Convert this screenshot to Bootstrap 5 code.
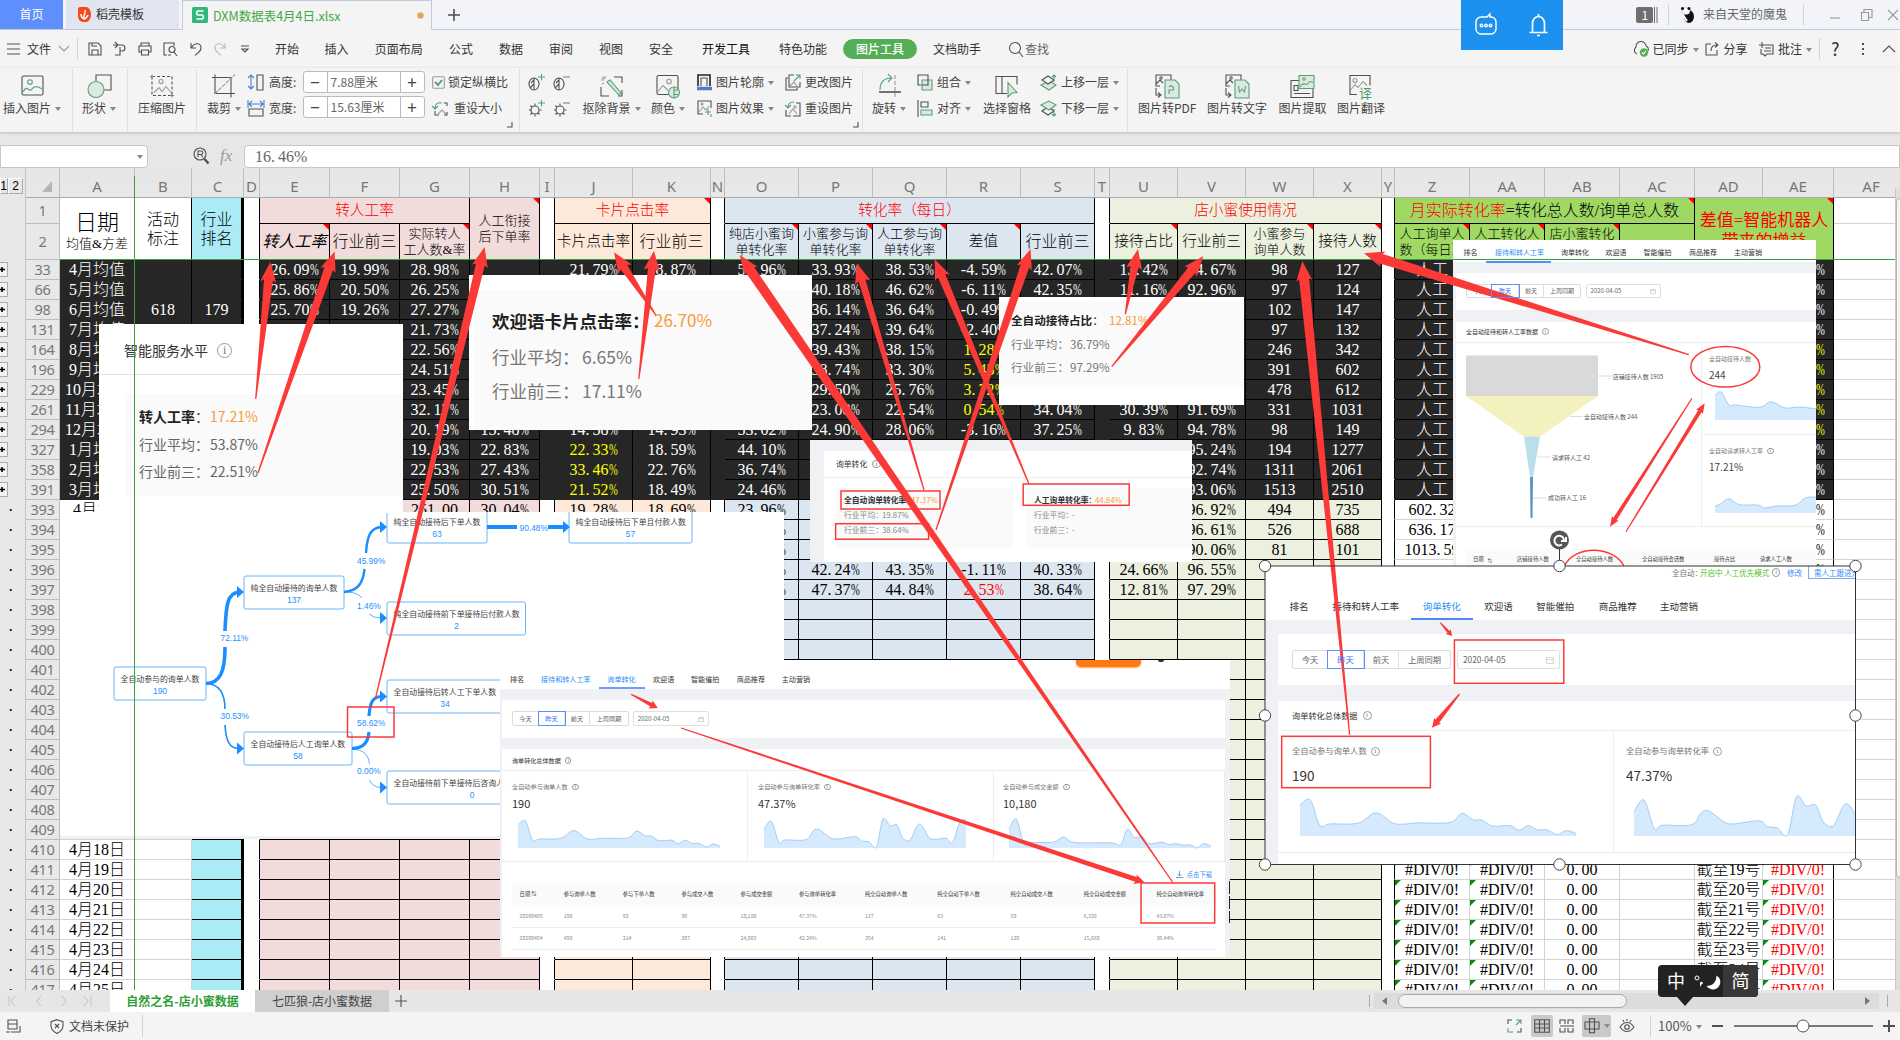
<!DOCTYPE html>
<html lang="zh-CN">
<head>
<meta charset="utf-8">
<meta name="viewport" content="width=device-width, initial-scale=1">
<title>DXM数据表4月4日.xlsx</title>
<link href="https://cdn.jsdelivr.net/npm/bootstrap@5.3.0/dist/css/bootstrap.min.css" rel="stylesheet">
<style>
:root{--ui:"Noto Sans","Noto Sans CJK SC",sans-serif;--song:"Liberation Serif","Noto Sans CJK SC",serif;--red:#fb3a38}
html,body{height:100%}
body{width:1900px;height:1040px;overflow:hidden;margin:0;background:#e7e7e7;font:12px/1.2 "Noto Sans CJK SC",sans-serif;color:#333}
svg{display:block;flex:none;overflow:visible}
.ic{fill:none;stroke:#505050;stroke-width:1.1}
.g{stroke:#5a9f78}.gf{fill:#dbe9e0}.bl{stroke:#4a80d0}.lt{stroke:#999}
.lane{display:flex;align-items:center;white-space:nowrap}
.lane>*{flex:none;display:flex;align-items:center;height:100%}
/* title bar */
#titlebar{height:30px;background:#f2f4fa;border-bottom:1px solid #c3c9df}
#titlebar .home{width:63px;height:29px;background:#5f8ffc;color:#fff}
#titlebar .docer{width:113px;height:29px;background:#e1e5f0;margin-left:3px;padding-left:12px;gap:5px}
#titlebar .sheetfile{width:250px;height:30px;background:#f4f4f4;margin-left:3px;border:1px solid #c3c9df;border-bottom:0;padding-left:9px;gap:5px;color:#41a946;font-size:12.5px}
#tray{left:1461px;top:0;width:102px;height:50px;background:#1b90ee;gap:30px;z-index:5}
.vsep{width:1px!important;background:#d2d2d2}
#menubar{height:38px;background:#f4f4f4}
#menubar .pill{height:20px;border-radius:10px;background:#54ae55;color:#fff;width:74px;font-weight:500;display:flex;align-items:center;justify-content:center}
#ribbon{height:64px;background:#f4f4f4;box-shadow:0 1px 3px #bbb;position:relative;z-index:1;color:#444}
#ribbon .big{display:flex;flex-direction:column;align-items:center;gap:2px;height:60px;padding-top:4px;justify-content:flex-start}
#ribbon .big svg{height:25px}
#ribbon .duo{display:flex;flex-direction:column;align-items:flex-start;gap:8px;height:62px;padding-top:4px}
#ribbon .duo>div{display:flex;align-items:center;height:18px;gap:4px}
.car::after{content:"";display:inline-block;border:3px solid transparent;border-top:4px solid #888;border-bottom:0;margin-left:4px;vertical-align:2px}
.spin{width:122px;height:22px!important;border:1px solid #bbb;border-radius:3px;background:#fff;display:flex;align-items:center}
.spin b{width:23px;text-align:center;font-weight:400;font-size:17px;line-height:20px;color:#444;flex:none}
.spin i{font-style:normal;flex:1;border-left:1px solid #bbb;border-right:1px solid #bbb;padding-left:3px;line-height:20px;color:#666;font-size:12px}
#fbar{height:36px;padding-top:13px;background:#e7e7e7}
.namebox{width:148px;height:23px;background:#fff;border:1px solid #c6c6c6;border-radius:0 4px 4px 0}
.fxbox{width:1656px;height:23px;background:#fff;border:1px solid #c6c6c6;border-radius:4px 0 0 4px;font:16px/21px var(--song);color:#666;padding-left:10px}
/* grid */
#stage{position:relative;height:822px;overflow:hidden;background:#e7e7e7}
#grid{table-layout:fixed;border-collapse:separate;border-spacing:0;width:1909px;background:#fff}
#grid td,#grid th{padding:0;text-align:center;vertical-align:middle;white-space:nowrap;overflow:hidden;font:300 16px/19px var(--song);color:#000;border-right:1px solid #d4d4d4;border-bottom:1px solid #d4d4d4;position:relative}
#grid tr.data td{padding-top:1px;line-height:18px}
#grid th{background:#e8e8e8;font:15px/19px var(--ui);color:#777;border-color:#bdbdbd}
#grid th.num{font-size:14.5px;letter-spacing:-.3px}
#grid th.ol{border-right:1px solid #c4c4c4;border-bottom:0;text-align:left;font:bold 12px/15px "Liberation Sans",sans-serif;color:#000}
#grid th.col{background:linear-gradient(#e6e6e6,#e8e8e8);padding-top:8px;border-bottom-color:#aaa}
#grid td.k{border-color:#000}
#grid td.dk{background:#262626;color:#fff;border-right-color:#000;border-bottom-color:#000}
#grid td.nb{border-bottom-color:#262626;border-right-color:#262626}
#grid td.nh{border-bottom-color:#262626}
#grid td.wh{background:#fff;border-color:#fff;border-right-color:#000}
#grid td.cy{background:#abebf5;border-color:#000;border-right:3px solid #000}
#grid td.dk.thick{border-right:3px solid #000}
#grid td.pk{background:#f2dcdb}#grid td.or{background:#fde9d9}#grid td.bu{background:#dce6f1}#grid td.gn{background:#ebf1de}#grid td.gr{background:#9fd863}
#grid td.ye{color:#ff0}#grid td.rd{color:#f00}
#grid td.s13{font-size:13px;line-height:16px}#grid td.s14{font-size:14.67px}
#grid td.note::after{content:"";position:absolute;right:0;top:0;border:3px solid #f00;border-left-color:transparent;border-bottom-color:transparent}
#grid td.err::before{content:"";position:absolute;left:0;top:0;border:3px solid #0a8a0a;border-right-color:transparent;border-bottom-color:transparent}
.plus{display:block;width:8px;height:15px;border:1px solid #aaa;border-left:0;background:#f2f2f2}
.lvl{display:inline-block;width:15px;height:16px;border:1px solid #aaa;border-left-color:#fff;border-top-color:#fff;text-align:center;font:12px/14px "Liberation Sans",sans-serif;margin-top:-2px}
#vbar{right:0;top:20px;width:5px;height:802px;background:#dedede;border-left:1px solid #c8c8c8}
#vbar div{margin-top:10px;height:680px;background:#f4f4f4;border:1px solid #b5b5b5;border-right:0;border-radius:4px 0 0 4px}
/* inserted pictures */
.pic{position:absolute;background:#fff;overflow:hidden;white-space:nowrap;color:#333}
.pic .stat{display:flex;align-items:center}
.og{color:#f79a35}.mut{color:#777}.blu{color:#2f8ff5}
.seg{display:flex;border:1px solid #dcdcdc;border-radius:2px;color:#666}
.seg>div{display:flex;align-items:center;justify-content:center;border-right:1px solid #e0e0e0;flex:none}
.seg>div:last-child{border:0}
.seg>.on{outline:1px solid #5c8ff8;color:#2f6ff5;z-index:1}
.dt{display:flex;align-items:center;justify-content:space-between;border:1px solid #e0e0e0;border-radius:2px;color:#666}
.inf{display:inline-flex;align-items:center;justify-content:center;border:1px solid #999;border-radius:50%;width:1.3em;height:1.3em;font:.85em/1 "Liberation Serif",serif;color:#777;flex:none}
#over{position:absolute;left:0;top:0}
/* bottom */
#tabsbar{height:22px;background:#e6e6e6}
#status{height:28px;background:#f4f4f4;color:#444}
#ime{left:1658px;top:965px;width:100px;height:32px;background:#222;border-radius:4px;color:#fff;font-size:18px;z-index:6;overflow:visible}
#ime::after{content:"";position:absolute;left:19px;top:32px;border:8px solid transparent;border-top:9px solid #222;border-bottom:0}
#ime .jian{width:35px;background:#383838;border-radius:0 4px 4px 0}
</style>
<script src="https://cdn.jsdelivr.net/npm/bootstrap@5.3.0/dist/js/bootstrap.bundle.min.js"></script>
</head>
<body>
<header id="titlebar" class="d-flex align-items-center">
  <div class="home d-flex align-items-center justify-content-center">首页</div>
  <div class="docer d-flex align-items-center"><svg width="13" height="15" viewBox="0 0 13 15"><path fill="#f8481b" d="M2 0h6a5 7.500 0 0 1 0 15H5a5 6 0 0 1-5-6V2a2 2 0 0 1 2-2z"/><path stroke="#fff" stroke-width="1.500" fill="none" d="M6 12C5 8 8 7 7 3M6 12c2 0 3-2 4-4M6 12C4 11 3 9 3 7"/></svg><span>稻壳模板</span></div>
  <div class="sheetfile d-flex align-items-center"><svg width="16" height="16" viewBox="0 0 16 16"><rect width="16" height="16" rx="1.500" fill="#2fb97c"/><path fill="none" stroke="#fff" stroke-width="1.600" d="M11.500 4H6.200a1.500 1.500 0 0 0-1.500 1.500v1A1.500 1.500 0 0 0 6.200 8h3.600a1.500 1.500 0 0 1 1.500 1.500v1A1.500 1.500 0 0 1 9.800 12H4.500"/></svg><span style="width:199px">DXM数据表4月4日.xlsx</span><svg width="7" height="7"><circle cx="3.500" cy="3.500" r="3.200" fill="#e8a35c"/></svg></div>
  <svg class="ic" style="margin-left:16px" width="12" height="12"><path stroke-width="1.600" d="M6 0v12M0 6h12"/></svg>
  <div class="lane" style="margin-left:auto;width:264px;height:29px;color:#666">
    <div style="width:32px"><svg width="22" height="16"><rect width="17" height="16" rx="2" fill="#6f6f6f"/><text x="5.500" y="12.500" fill="#fff" font-size="12">1</text><path d="M18.500 0v16M21 0v16" stroke="#6f6f6f"/></svg></div>
    <div style="width:12px"><i class="vsep" style="height:20px"></i></div>
    <div style="width:23px"><svg width="15" height="16"><ellipse cx="9" cy="9.500" rx="5" ry="6.500" fill="#111"/><ellipse cx="6" cy="4" rx="4" ry="3.500" fill="#fff" stroke="#aaa" stroke-width=".5"/><circle cx="2.500" cy="1.500" r="1.500"/><circle cx="9" cy="1.500" r="1.500"/><path d="M3 8l4 6" stroke="#fff" stroke-width="2"/></svg></div>
    <div style="width:100px">来自天堂的魔鬼</div>
    <div style="width:27px"><i class="vsep" style="height:20px"></i></div>
    <div style="width:31px"><svg class="ic lt" width="10" height="10"><path d="M0 8h10"/></svg></div>
    <div style="width:27px"><svg class="ic lt" width="12" height="12"><path d="M.5 3.500h7v8h-7zM3 3V.5h8v8H8"/></svg></div>
    <div><svg class="ic lt" width="12" height="12"><path d="M0 1l10 10M10 1L0 11"/></svg></div>
  </div>
</header>
<div id="tray" class="position-absolute d-flex align-items-center justify-content-center">
  <svg width="24" height="24" fill="none" stroke="#fff" stroke-width="1.400"><path d="M7 4h5l3-3v3h1a5 5 0 0 1 5 5v7a5 5 0 0 1-5 5H6a5 5 0 0 1-5-5V9a5 5 0 0 1 5-5z"/><circle cx="6.500" cy="12.500" r="1.300"/><circle cx="11" cy="12.500" r="1.300"/><circle cx="15.500" cy="12.500" r="1.300"/></svg>
  <svg width="20" height="24" fill="none" stroke="#fff" stroke-width="1.700"><path d="M3.500 19v-8.500a6 7 0 0 1 12 0V19M.5 19.500h18M9.500 1v3M8 22.500h3"/></svg>
</div>
<nav id="menubar" class="lane"></nav>
<section id="ribbon" class="lane"></section>
<section id="fbar" class="d-flex">
  <div class="namebox d-flex align-items-center justify-content-end pe-1"><span class="car"></span></div>
  <svg class="ic" style="margin:2px 0 0 45px" width="17" height="18"><circle cx="7" cy="7" r="6"/><path d="M5 10V4h3a1.700 1.700 0 0 1 0 3.500H5M8 7.500l2 2.500"/><path stroke-width="2.400" d="M11.500 12l4 4.500"/></svg>
  <div style="width:35px;font:italic 17px/21px 'Liberation Serif',serif;color:#999;padding-left:10px">fx</div>
  <div class="fxbox" style="margin-left:-1px">16.<span style="margin-left:3px"></span>46%</div>
</section>
<main id="stage"></main>
<section id="tabsbar" class="lane">
  <div style="width:110px;padding-left:8px"><svg class="ic" style="stroke:#c8c8c8" width="80" height="10"><path d="M1 0v10M7 0L3 5l4 5M33 0l-4 5 4 5M54 0l4 5-4 5M76 0l4 5-4 5M83 0v10"/></svg></div>
  <div style="width:145px;background:#fff;color:#2e9e35;font-weight:700;justify-content:center;font-size:12px">自然之名-店小蜜数据</div>
  <div style="width:134px;background:#cfcfcf;color:#444;justify-content:center">七匹狼-店小蜜数据</div>
  <div style="width:980px;padding-left:6px"><svg class="ic" width="12" height="12"><path d="M6 0v12M0 6h12"/></svg></div>
  <div style="width:5px"><i class="vsep" style="height:12px;background:#aaa"></i></div>
  <div style="width:505px;background:#dcdcdc;height:16px;padding:0 8px"><svg width="6" height="8"><path d="M5 0v8L0 4z" fill="#777"/></svg><span style="width:229px;height:14px;margin-left:10px;border:1px solid #aaa;border-radius:7px;background:#f2f2f2"></span><svg style="margin-left:auto" width="6" height="8"><path d="M0 0v8l5-4z" fill="#777"/></svg></div>
  <div style="padding-left:8px"><i class="vsep" style="height:12px;background:#aaa"></i></div>
</section>
<footer id="status" class="lane">
  <div style="width:50px;padding-left:6px"><svg class="ic" width="14" height="14"><path d="M2 1h9v9H2zM2 5h9M5 13h9V7M0 13h4"/></svg></div>
  <div style="width:19px"><svg class="ic" width="14" height="15"><path d="M7 .7l6 2V7c0 4-3 6-6 7.500C4 13 1 11 1 7V2.700zM5 5l4 4M9 5L5 9"/></svg></div>
  <div style="width:73px">文档未保护</div>
  <div><i class="vsep" style="height:22px"></i></div>
  <div class="ms-auto" style="width:24px"><svg class="ic" width="15" height="14"><path d="M1 5V1h4M10 13h4V9"/><path class="g" d="M9 1h5v4M1 9v4h5M14 1L9 6"/></svg></div>
  <div style="width:28px"><span class="d-flex align-items-center justify-content-center" style="width:22px;height:22px;background:#c9c9c9;border-radius:2px"><svg class="ic" width="16" height="14"><path d="M.7.7h14.600v12.600H.7zM.7 5h14.600M.7 9h14.600M5.500.7v12.600M10.500.7v12.600"/></svg></span></div>
  <div style="width:23px"><svg class="ic" width="16" height="14"><path d="M1 5V1h5v4M9 5V1h5v4M1 9v4h5V9M9 9v4h5V9M1 7h14"/></svg></div>
  <div style="width:37px"><span class="d-flex align-items-center justify-content-center car" style="width:29px;height:22px;background:#c9c9c9;border-radius:2px"><svg class="ic" width="16" height="16"><path d="M1 4h14v7H1zM5.500.7h5v14h-5zM5.500 4v7M10.500 4v7"/></svg></span></div>
  <div style="width:31px"><svg class="ic" width="16" height="15"><path d="M1 8c4-6 10-6 14 0-4 6-10 6-14 0zM4 1l1 2M8 0v2M12 1l-1 2"/><circle cx="8" cy="8" r="2.300"/></svg></div>
  <div style="width:8px"><i class="vsep" style="height:22px"></i></div>
  <div style="width:54px;font-size:13px;color:#555"><span class="car">100%</span></div>
  <div style="width:22px"><svg class="ic" width="11" height="10"><path stroke-width="2" d="M0 5h11"/></svg></div>
  <div style="width:149px"><svg class="ic" width="139" height="14"><path d="M0 7h139" stroke-width="1.300"/><circle cx="69" cy="7" r="6" fill="#fff" stroke-width="1"/></svg></div>
  <div style="width:17px"><svg class="ic" width="12" height="12"><path stroke-width="2" d="M6 0v12M0 6h12"/></svg></div>
</footer>
<div id="ime" class="position-absolute d-flex align-items-center"><span style="padding-left:9px;width:34px">中</span><svg width="31" height="20"><circle cx="5" cy="7" r="2" fill="none" stroke="#fff"/><path fill="#fff" d="M8 12a1.400 1.400 0 1 1 1.500 1.500L8 16z"/><path fill="#fff" d="M24.500 4.500a7.500 7.500 0 1 1-10 10.500c6 0 10-4 10-10.500z"/></svg><span class="jian d-flex align-items-center justify-content-center h-100">简</span></div>

<script>
const $=s=>document.querySelector(s);
const svg=(w,h,b,c='ic')=>`<svg class="${c}" width="${w}" height="${h}" viewBox="0 0 ${w} ${h}">${b}</svg>`;
// a row of items given as [left, html]; every item is as wide as the gap to its neighbour
const lane=(x0,items,end)=>items.map(([x,h],i)=>(i==0&&x>x0?`<div style="width:${x-x0}px"></div>`:'')+`<div style="width:${((items[i+1]||[end])[0]-x).toFixed(1)}px">${h}</div>`).join('');

/* ---- menu ---- */
const hs='<i class="vsep" style="height:22px"></i>';
$('#menubar').innerHTML=lane(0,[
 [7,svg(13,12,'<path d="M0 1h13M0 6h13M0 11h13"/>')],[27,'文件'],[59,svg(10,6,'<path class="lt" d="M0 0l5 5 5-5"/>')],[77,hs],
 [88,svg(14,14,'<path d="M1 1h9l3 3v9H1zM4 13V8h6v5M4 1v3h5"/>')],
 [113,svg(14,14,'<path d="M3 3h6a3 3 0 0 1 0 6H7M0 3h3M2 0l3 3-3 3M7 5v8H2"/>')],
 [138,svg(14,14,'<path d="M3 4V1h8v3M3 10H1V4h12v6h-2M3.500 8h7v5h-7z"/>')],
 [163,svg(15,14,'<path d="M4 13H1V1h10v3M11 10l3 4M5 13h3"/><circle cx="9" cy="7.500" r="3"/>')],
 [190,svg(12,14,'<path d="M1 1v5h5M1.500 5.500C5 0 11 1 11 6c0 4-4 5-6 7.500"/>')],
 [214,svg(12,14,'<path stroke="#bbb" d="M11 1v5H6M10.500 5.500C7 0 1 1 1 6c0 4 4 5 6 7.500"/>')],
 [241,svg(8,8,'<path d="M0 1h8M1 4h6L4 7z"/>')],
 [275,'开始'],[324.5,'插入'],[374.700,'页面布局'],[449,'公式'],[499,'数据'],[549,'审阅'],[599,'视图'],[649,'安全'],[702,'<span style="color:#111">开发工具</span>'],[779,'特色功能'],[843,'<span class="pill">图片工具</span>'],[933,'文档助手'],
 [1009,svg(15,16,'<circle cx="6" cy="7" r="5.500"/><path d="M10 11l4 5"/>')],[1025,'<span style="color:#666">查找</span>'],
 [1632,svg(18,15,'<path d="M5 12a4 4 0 0 1-1-7 5 5 0 0 1 10-1 4 4 0 0 1 2 5"/><circle cx="12" cy="10.500" r="4.200" fill="#54ae55" stroke="none"/><path stroke="#fff" d="M10 10.500l1.500 1.500 2.500-3"/>')],[1652.5,'<span class="car">已同步</span>'],
 [1705,svg(14,14,'<path d="M6 2H1v11h11V8M6 9c0-4 2-6 6-6M10 .5l3 2.500-3 2.500"/>')],[1723.5,'分享'],
 [1759,svg(15,15,'<path d="M6 3h8v9H8l-2 2-2-2H2V7M3 0v6M0 3h6M6 6h6M5 9h7"/>')],[1778,'<span class="car">批注</span>'],[1819,hs],
 [1831,'<span style="font-size:18px">?</span>'],[1861,svg(4,14,'<path stroke-width="2" d="M2 1v2M2 6v2M2 11v2"/>')],[1882,svg(14,8,'<path d="M1 7l6-6 6 6"/>')]
],1900);

/* ---- ribbon ---- */
const big=(i,t)=>`<div class="big">${i}<span>${t}</span></div>`;
const duo=(a,b)=>`<div class="duo"><div>${a}</div><div>${b}</div></div>`;
const sep='<i class="vsep" style="height:62px;background:#e0e0e0"></i>';
const bulb=(s,k)=>svg(17,17,(k?'<circle cx="7" cy="10" r="4"/><path d="M7 3.500v2M7 14.500v2M1 10h2M11.500 10h2M2.500 5.500L4 7M11.500 14.500L10 13M2.500 14.500L4 13"/>':'<ellipse cx="6" cy="10" rx="5" ry="6"/><path d="M6 4v12M6 6L3 9M6 10l-4 4"/>')+`<path class="g" d="${s?'M10 3h7M13.500 0v6.500':'M10 3h7'}"/>`);
const pic='<rect x="1" y="1" width="21" height="19" rx="1.500"/>';
const doc=l=>svg(25,25,'<path d="M5 12H1V1h15v5M1 14v7h4M3 18.500l3 2.500-3 2.500M1 10l4-4 3 3"/><circle cx="6" cy="4" r="1.200"/><path class="g gf" d="M10 6h10l4 4v14H10z"/>'+l);
$('#ribbon').innerHTML=lane(0,[
 [3,big(svg(23,23,pic+'<path class="g" d="M2 17c4-8 6 0 8-2s4-6 11-1"/><circle class="g" cx="9" cy="7" r="2.300"/>'),'<span class="car">插入图片</span>')],[72,sep],
 [82,big(svg(25,25,'<path d="M9 11V1h15v15H17"/><circle class="g gf" cx="9" cy="15.500" r="8"/>'),'<span class="car">形状</span>')],[127,sep],
 [138,big(svg(24,24,'<path stroke-dasharray="3 2" d="M2 2h20v19H2z"/><path class="lt" d="M4 18l5-5 3 4 4-5 5 6"/><circle class="lt" cx="11" cy="7" r="2"/><path class="g" d="M0 2h4M2 0v4M20 21h4M22 19v4"/>'),'压缩图片')],[196,sep],
 [207,big(svg(24,24,'<path d="M3 0v19h20M0 3h19v20"/><path class="lt" stroke-dasharray="4 1" d="M3 19L23 0"/>'),'<span class="car">裁剪</span>')],
 [248,duo(svg(16,17,'<path d="M9 1h6v15H9z"/><path class="bl" d="M3 1v14M0 4l3-3 3 3M0 12l3 3 3-3"/>')+'<span style="margin-left:1px">高度:</span>',svg(16,17,'<path d="M1 9h14v7H1z"/><path class="bl" d="M1 4h14M4 1L1 4l3 3M12 1l3 3-3 3M0 0v8M16 0v8"/>')+'<span style="margin-left:1px">宽度:</span>')],
 [302.5,`<div class="duo" style="gap:3px;padding-top:2px"><div class="spin" style="gap:0"><b>−</b><i>7.88厘米</i><b>+</b></div><div class="spin" style="gap:0"><b>−</b><i>15.63厘米</i><b>+</b></div></div>`],
 [432,duo(svg(13,13,'<rect x=".7" y=".7" width="11.600" height="11.600" rx="1" stroke="#999"/><path class="g" stroke-width="2" d="M3 6l3 3 4-5"/>')+'<span style="margin-left:-1px">锁定纵横比</span>',svg(18,17,'<path d="M3 11v4h4M15 12v3h-3M12 3h3v3"/><path class="g" d="M3 8C3 4 6 2 10 3M0 6l3 3 3-3"/><path class="lt" d="M6 14l4-4 4 4"/>')+'<span>重设大小</span>')],
 [507,'<div style="align-self:flex-end;padding-bottom:4px">'+svg(6,6,'<path d="M5 0v5H0"/>')+'</div>'],[518.5,sep],
 [528,duo(bulb(1),bulb(1,1))],[553,duo(bulb(0),bulb(0,1))],
 [582.5,big(svg(23,23,'<path d="M14 2h8v6M1 12v9h8M22 15v6h-4"/><path class="g gf" d="M7 7l3-2 11 13-2 2z"/><path class="lt" d="M5 1v3M1 5h3M2 2l2 2M2 9l2-1"/>'),'<span class="car">抠除背景</span>')],
 [651,big(svg(24,24,pic+'<path class="lt" d="M2 17l5-6 5 5"/><circle class="lt" cx="13" cy="7" r="2.300"/><circle class="g gf" cx="18" cy="18" r="5.500"/><path class="g" d="M18 12v12M18 16l5-1M18 20l4 0"/>'),'<span class="car">颜色</span>')],
 [697,duo(svg(15,16,'<path stroke="#222" stroke-width="1.600" d="M1 12V1h12v11"/><path d="M4 12V4h6v8"/><path stroke="#4d7fc4" stroke-width="3.500" d="M0 14.500h15"/>')+'<span class="car">图片轮廓</span>',svg(15,16,'<path d="M6 14H1V1h13v7"/><path class="lt" d="M2 12l4-5 3 3 3-4"/><circle class="lt" cx="5" cy="4" r="1"/><path class="g" d="M11 9v6M8 12h6M14 14v3"/>')+'<span class="car">图片效果</span>')],
 [785,duo(svg(16,17,'<path d="M3 4H1v12h11v-2M9 1H4v12h11V8"/><path class="g" d="M9 7l6-6M11 1h4v4"/><path class="lt" d="M5 12l4-4 3 4"/>')+'<span>更改图片</span>',svg(16,17,'<path d="M1 10v6h5M8 16h7V3h-4"/><path class="g" d="M3 7c0-3 2-5 6-5M0 5l3 3 3-3"/><path class="lt" d="M4 14l4-5 4 5"/><circle class="lt" cx="10" cy="7" r="1.200"/>')+'<span>重设图片</span>')],
 [853,'<div style="align-self:flex-end;padding-bottom:4px">'+svg(6,6,'<path d="M5 0v5H0"/>')+'</div>'],[862,sep],
 [872,big(svg(23,25,'<path class="g" d="M2 16C2 8 6 4 14 4M10 0l4 4-4 4"/><path d="M1 18h22" stroke-width="1.600"/><path class="lt" stroke-dasharray="4 2" d="M17 1v23"/>'),'<span class="car">旋转</span>')],
 [917,duo(svg(16,17,'<path d="M4 11H1V1h10v4"/><path class="g gf" d="M5 6h10v10H5z"/><path d="M11 5v6H5"/>')+'<span class="car">组合</span>',svg(16,17,'<path d="M1 0v17M4 2h7v5H4z"/><path class="g gf" d="M4 10h11v5H4z"/>')+'<span class="car">对齐</span>')],
 [983,big(svg(24,24,'<path d="M12 19H1V2h21v8M7 2v17"/><path class="g gf" d="M13 8l9 10-5 .5-4 4z"/>'),'选择窗格')],
 [1040,duo(svg(17,17,'<path class="g gf" d="M1 11l8-4 7 4-7 5z"/><path fill="#f4f4f4" d="M2 6l6-4 6 4-6 4z"/><path class="g" d="M14 8V1M12 3l2-2 2 2"/>')+'<span class="car">上移一层</span>',svg(17,17,'<path d="M2 11l6-4 6 4-6 4z"/><path class="g gf" d="M1 5l8-4 7 4-7 5z"/><path class="g" d="M14 9v7M12 14l2 2 2-2"/>')+'<span class="car">下移一层</span>')],[1127,sep],
 [1138,big(doc('<path class="g" d="M14 20v-4h4a2.500 2.500 0 1 0-4-3"/>'),'图片转PDF')],
 [1207,big(doc('<path class="g" d="M13.500 12l1 6 2.500-3 2.500 3 1-6"/>'),'图片转文字')],
 [1278.5,big(svg(25,24,'<path d="M9 6H1v17h22v-9M4 11h4v5H4zM4 19h16"/><path class="g gf" d="M9 1h15v13H9z"/><path class="g" d="M10 12c4-6 6 0 8-3s3-2 5-1"/><circle class="g" cx="14" cy="4.500" r="1.200"/>'),'图片提取')],
 [1337,big(svg(24,24,'<path d="M8 20H1V1h20v10"/><path class="lt" d="M2 15l4-5 3 3 5-6 4 4"/><circle class="lt" cx="6" cy="6" r="2"/><text x="10" y="23" font-size="13" fill="#4a9a6c" stroke="none">译</text>'),'图片翻译')]
],1500);

/* ---- sheet ---- */
const colDef='A:60,B:135,C:192,D:244,E:260,F:330,G:400,H:470,I:540,J:555,K:633,N:711,O:725,P:799,Q:873,R:947,S:1021,T:1095,U:1110,V:1178,W:1246,X:1314,Y:1382,Z:1395,AA:1470,AB:1545,AC:1620,AD:1695,AE:1763,AF:1834'.split(',').map(s=>s.split(':'));
const cols=colDef.map(c=>c[0]),xs=colDef.map(c=>+c[1]).concat(1909);
let T='<table id="grid"><colgroup><col style="width:26px"><col style="width:34px">'+cols.map((c,i)=>`<col style="width:${xs[i+1]-xs[i]}px">`).join('')+'</colgroup>';
T+='<tr style="height:30px"><th class="ol col" style="white-space:nowrap"><span class="lvl" style="width:8px;text-indent:-1px;vertical-align:top">1</span><span class="lvl" style="vertical-align:top">2</span></th><th class="col"><svg width="10" height="11" style="margin-left:16px"><path d="M10 0v11H0z" fill="#b5b5b5"/></svg></th>'+cols.map(c=>`<th class="col">${c}</th>`).join('')+'</tr>';
const td=(c,t,a='')=>`<td class="${c}" ${a}>${t}</td>`;
T+='<tr style="height:26px"><th class="ol"></th><th class="num">1</th>'
 +td('wh','<div style="font-size:22px;line-height:26px;padding-top:4px">日期</div><div style="font-size:13px;line-height:16px">均值&amp;方差</div>','rowspan=2 style="border-right-color:#fff"')
 +td('wh','活动<br>标注','rowspan=2')+td('cy','行业<br>排名','rowspan=2')+td('wh','','rowspan=2')
 +td('pk k s14 rd','转人工率','colspan=3')+td('pk k s13 note','人工衔接<br>后下单率','rowspan=2')+td('wh','','rowspan=2')
 +td('or k s14 rd note','卡片点击率','colspan=2')+td('wh k','')+td('bu k s14 rd','转化率（每日）','colspan=5')+td('wh k','')
 +td('gn k s14 rd','店小蜜使用情况','colspan=4')+td('wh','','rowspan=2')
 +td('gr k note','<span style="color:#f00">月实际转化率</span>=转化总人数/询单总人数','colspan=4')
 +td('gr k rd note','<b style="font-size:17px;line-height:21px;display:block;margin-top:5px">差值=智能机器人<br>带来的增益</b>','colspan=2 rowspan=2')+td('','')+'</tr>';
T+='<tr style="height:36px"><th class="ol"></th><th class="num">2</th>'
 +td('pk k note','<b><i>转人工率</i></b>')+td('pk k','行业前三')+td('pk k s13 note','实际转人<br>工人数&amp;率')
 +td('or k s14','卡片点击率')+td('or k','行业前三')+td('wh k','')
 +td('bu k s13 note','纯店小蜜询<br>单转化率')+td('bu k s13 note','小蜜参与询<br>单转化率')+td('bu k s13 note','人工参与询<br>单转化率')+td('bu k s14 note','差值')+td('bu k','行业前三')+td('wh k','')
 +td('gn k s14 note','接待占比')+td('gn k s14','行业前三')+td('gn k s13 note','小蜜参与<br>询单人数')+td('gn k s14 note','接待人数')
 +td('gr k s13 note','人工询单人<br>数（每日）')+td('gr k s13 note','人工转化人<br>数（每日）')+td('gr k s13 note','店小蜜转化<br>人数')+td('gr k','')+td('','')+'</tr>';
const V={
A:'4月均值,5月均值,6月均值,7月均值,8月均值,9月均值,10月均值,11月均值,12月均值,1月均值,2月均值,3月均值,4月1日',
B:',,618',C:',,179',E:'26.09%,25.86%,25.70%',F:'19.99%,20.50%,19.26%',
G:'28.98%,26.25%,27.27%,21.73%,22.56%,24.51%,23.45%,32.17%,20.19%,19.03%,22.53%,25.50%,251.00',
H:',,,,,,,,15.48%,22.83%,27.43%,30.51%,30.04%',J:'21.79%,,,,,,,,14.58%,22.33%,33.46%,21.52%,19.28%',K:'18.87%,,,,,,,,14.93%,18.59%,22.76%,18.49%,18.69%',
O:'51.96%,,,,,,,,53.02%,44.10%,36.74%,24.46%,23.96%,42.34%,31.25%,36.44%,43.07%',P:'33.93%,40.18%,36.14%,37.24%,39.43%,38.74%,29.50%,23.08%,24.90%,,,,,,,42.24%,47.37%',
Q:'38.53%,46.62%,36.64%,39.64%,38.15%,33.30%,25.76%,22.54%,28.06%,,,,,,,43.35%,44.84%',
R:'-4.59%,-6.11%,-0.49%,-2.40%,1.28%,5.45%,3.72%,0.54%,-3.16%,,,,,,,-1.11%,2.53%',
S:'42.07%,42.35%,,,,,,34.04%,37.25%,,,,,,,40.33%,38.64%',U:'13.42%,11.16%,,,,,,30.39%,9.83%,,,,,,,24.66%,12.81%',
V:'94.67%,92.96%,,,,,,91.69%,94.78%,95.24%,92.74%,93.06%,96.92%,96.61%,90.06%,96.55%,97.29%',
W:'98,97,102,97,246,391,478,331,98,194,1311,1513,494,526,81',X:'127,124,147,132,342,602,612,1031,149,1277,2061,2510,735,688,101',
Z:'人工,人工,人工,人工,人工,人工,人工,人工,人工,人工,人工,人工,602.32,636.17,1013.59'};
for(const k in V)V[k]=V[k].split(',');
const heads=[33,66,98,131,164,196,229,261,294,327,358,391];for(let n=393;n<=417;n++)heads.push(n);
const fam={E:'pk',F:'pk',G:'pk',H:'pk',J:'or',K:'or',O:'bu',P:'bu',Q:'bu',R:'bu',S:'bu',U:'gn',V:'gn',W:'gn',X:'gn'};
// percent signs and decimal points take one digit's width each
const fix=s=>/^-?\d*\.\d*%?$/.test(s)?s.replace('.','.<span style="margin-left:3px"></span>').replace('%','<span style="display:inline-block;transform:scaleX(.66);transform-origin:left;width:9px">%</span>'):s;
heads.forEach((n,r)=>{
 T+=`<tr class="data" style="height:20px"><th class="ol">${r<12?'<svg width="9" height="16"><path d="M0 .5h7.500v14H0" fill="#f2f2f2" stroke="#aaa"/><path d="M0 7.500h5M2 5v5" stroke="#000" stroke-width="1.600"/></svg>':'<span style="padding-left:9px">·</span>'}</th><th class="num">${n}</th>`;
 cols.forEach(c=>{
  let t=(V[c]||[])[r]||'',k='';
  if(r<12&&!['D','Y','AF'].includes(c)){
   k='dk';if('INT'.includes(c))k+=' nb';if('ABJKC'.includes(c))k+=' nh';if(c=='C')k+=' thick';
   if((c=='J'&&r>8)||(c=='R'&&r>3&&r<8)||(c=='AE'&&r>3&&r<9))k+=' ye';
  }else if('DINTY'.includes(c))k='wh';
  else if(fam[c])k='k '+fam[c];
  else if(c=='C')k='cy';
  if(c=='AE'&&r<18)t='-14.59%';
  if(c=='R'&&n==397)k+=' rd';
  if(n>=410&&c=='A')t=`4月${n-392}日`;
  if(n>=411){if(c=='Z'||c=='AA'||c=='AE'){t='#DIV/0!';k+=' err'}if(c=='AB')t='0.00';if(c=='AD')t=`截至${n-392}号`}
  if(c=='AE'&&n>=411)k+=' rd';
  T+=td(k,fix(t),c=='AE'&&r>11?'style="border-right-color:#000"':'');
 });T+='</tr>';
});
T+='</table>';

/* ---- pictures on the sheet; positions are page pixels, the stage begins at y=168 ---- */
const box=(x,y,w,h,html,st='')=>`<div class="pic" style="left:${x}px;top:${y-168}px;width:${w}px;height:${h}px;${st}">${html}</div>`;
const inf='<span class="inf">i</span>';
const smooth=p=>{let d=`M${p[0]}`;for(let i=0;i<p.length-1;i++){const a=p[i-1]||p[i],b=p[i],c=p[i+1],e=p[i+2]||c;d+=`C${b[0]+(c[0]-a[0])/6},${b[1]+(c[1]-a[1])/6} ${c[0]-(e[0]-b[0])/6},${c[1]-(e[1]-b[1])/6} ${c}`}return d};
// area chart: raw points, raw baseline, target width and height
const area=(pts,base,w,h)=>{const x0=pts[0][0],x1=pts.at(-1)[0],top=Math.min(...pts.map(p=>p[1]));const q=pts.map(p=>[+((p[0]-x0)/(x1-x0)*w).toFixed(1),+(h-(base-p[1])/(base-top)*h).toFixed(1)]);const d=smooth(q);return `<svg width="${w}" height="${h}"><path d="${d}V${h}H0z" fill="#d6eafd"/><path d="${d}" fill="none" stroke="#9fcdf8"/></svg>`};
const c1=[[164,795],[188,780],[210,855],[235,851],[300,849],[342,818],[380,848],[405,852],[440,848],[515,847],[543,820],[570,839],[590,840],[615,858],[655,856],[677,870],[698,856],[720,869],[742,869],[767,883],[787,871],[810,880]];
const c2=[[563,512],[578,486],[594,550],[606,542],[650,541],[665,514],[677,511],[700,535],[715,539],[752,532],[765,545],[780,548],[796,563],[809,479],[824,499],[838,497],[850,535],[865,543],[880,499],[890,499],[905,535],[920,540],[940,537],[953,550],[968,490],[981,480]];
const c3=[[1069,512],[1084,481],[1100,555],[1115,550],[1160,549],[1182,534],[1205,550],[1280,551],[1300,557],[1314,511],[1328,535],[1345,533],[1358,553],[1385,549],[1400,556],[1415,553],[1430,558],[1445,557],[1458,566],[1472,553],[1487,560]];
const a1=[[1019,655],[1037,645],[1060,685],[1080,685],[1150,692],[1183,675],[1225,694],[1265,691],[1319,697]],a2=[[1019,985],[1035,978],[1060,962],[1090,980],[1145,981],[1165,990],[1200,984],[1255,982],[1285,960],[1319,957]];
const cal=s=>svg(s,s,`<path stroke="#ccc" stroke-width=".8" d="M.5 1.500h${s-1}v${s-2}h-${s-1}zM.5 ${s*.45}h${s-1}"/>`);
const ln=(x0,items,end,st)=>`<div class="lane" style="${st}">${lane(x0,items,end)}</div>`;
const kv=(a,b,c,w,st)=>`<div class="stat" style="${st}"><span style="width:${w}px">${a}：</span><span class="${c}">${b}</span></div>`;
const names=['排名','接待和转人工率','询单转化','欢迎语','智能催拍','商品推荐','主动营销'];
const tabs=(xz,on)=>xz.map((x,i)=>[x,`<span class="${on.includes(i)?'blu':''}">${names[i]}</span>`]);
const seg=(w,h,f,dx,dw)=>`<div class="d-flex" style="font-size:${f}px;gap:${dx}px"><div class="seg" style="height:${h}px">${['今天','昨天','前天','上周同期'].map((t,i)=>`<div class="${i==1?'on':''}" style="width:${w[i]}px">${t}</div>`).join('')}</div><div class="dt" style="width:${dw}px;height:${h}px;padding:0 ${f*.6}px"><span>2020-04-05</span>${cal(Math.round(f))}</div></div>`;

let P='';
// flow chart of the enquiry funnel
const nodes=[[114,667,92,33,'全自动参与的询单人数',190],[244,576,100,33,'纯全自动接待的询单人数',137],[387,510,100,33,'纯全自动接待后下单人数',63],[387,602,138.5,33,'纯全自动接待前下单接待后付款人数',2],[387,680,116,33,'全自动接待后转人工下单人数',34],[244,732,108,33,'全自动接待后人工询单人数',58],[387,771,170,33,'全自动接待前下单接待后咨询人数',0],[569,510,123,33,'纯全自动接待后下单且付款人数',57]];
let F=nodes.map(([x,y,w,h,t,v])=>`<rect x="${x}" y="${y}" width="${w}" height="${h}" rx="2" fill="#fff" stroke="#6bb4ff"/><text x="${x+6.5}" y="${y+14.5}" fill="#444" font-size="7.9">${t}</text><text x="${x+w/2}" y="${y+27}" text-anchor="middle" fill="#2490ff" font-size="8.5" font-family="Liberation Sans,sans-serif">${v}</text>`).join('');
const ed=(d,w)=>`<path d="${d}" fill="none" stroke="#1b8dff" stroke-width="${w}"/>`,ah=(x,y)=>`<path d="M${x} ${y}l-7-6v12z" fill="#1b8dff"/>`,pl=(x,y,t)=>`<text x="${x}" y="${y+3}" fill="#2490ff" font-size="8.4" font-family="Liberation Sans,sans-serif">${t}</text>`;
F+=ed('M206 689.500C220 689 225 680 225 647M225 631C226 603 228 593 239 592',3.6)+ah(244,592)+ed('M206 683.500C220 684 225 695 225 709M225 725C226 742 230 748 238 748.500',1.6)+ah(244,748.5)
 +ed('M344 592C358 591 363 583 364.500 569M366 553C367 537 370 528 381 527',2.4)+ah(387,527)+ed('M344 592C352 592 358 593 362 598M369 614q4 4 12 4',.7)+ah(387,618)
 +ed('M352 748.500C364 748 368 742 369 732M369 716C370 702 373 697 381 696.500',3.2)+ah(387,696.5)+ed('M352 749C364 750 368 754 369.500 764M369.500 780q3 7 11 7.500',.7)+ah(387,787.5)
 +ed('M487 527H517M548 527H563',4)+ah(570,527)
 +pl(220.5,638,'72.11%')+pl(220.5,716,'30.53%')+pl(357,560.5,'45.99%')+pl(357,606,'1.46%')+pl(357,723,'58.62%')+pl(357,771,'0.00%')+pl(519.5,527.5,'90.48%');
F=F.replace('M206 689.500C220 689 225 680','M206 683.500C220 683 225 672');
P+=box(60,512,724,327,`<svg width="724" height="327" viewBox="60 512 724 327"><path d="M60 836h724v3H60z" fill="#f0f1f5"/>${F}</svg>`);
// service level card
P+=box(99,324,304,189,`<div class="d-flex align-items-center" style="height:51px;border-bottom:1px solid #e4e4e4;padding:3px 0 0 25px;font-size:14px;gap:9px">智能服务水平<span style="font-size:14px;display:flex">${inf}</span></div><div style="margin:19px 0 0 26px;height:102px;background:#fafafa;padding:9px 14px;font-size:14px">${kv('<b style="color:#222">转人工率</b>','17.21%','og',71,'height:27px')}${kv('行业平均','53.87%','',71,'height:29px;color:#666')}${kv('行业前三','22.51%','',71,'height:24px;color:#666')}</div>`);
// welcome card
P+=box(469,275,343,155,`<div style="margin:15px 0 0 5px;height:140px;background:#fafafa;padding:11px 18px;font-size:17.500px"><div class="stat fw-bold" style="height:38px;color:#222"><span style="width:162px">欢迎语卡片点击率：</span><span class="og fw-normal" style="font-size:17px">26.70%</span></div>${kv('行业平均','6.65%','',90,'height:35px;color:#777')}${kv('行业前三','17.11%','',90,'height:32px;color:#777')}</div>`);
// auto reception card
P+=box(999,297,245,108,`<div style="margin-top:4px;height:86px;background:#fafafa;padding:7px 12px;font-size:11.600px">${kv('<b style="color:#222">全自动接待占比</b>','12.81%','og',98,'height:25px')}${kv('行业平均','36.79%','',59,'height:24px;color:#777')}${kv('行业前三','97.29%','',59,'height:21px;color:#777')}</div>`);
// conversion card
P+=box(810,440,382,122,`<div style="margin:11px 0 0 14px;height:111px;background:#fff;font-size:7.800px"><div class="lane" style="height:27px;border-bottom:1px solid #eee;padding-left:12px;gap:5px"><span>询单转化</span>${inf}</div><div class="d-flex" style="padding:10px 0 0 12px;gap:13px"><div style="width:177px;height:60px;background:#fafafa;padding:4px 8px;flex:none">${kv('<b>全自动询单转化率</b>','47.37%','og',67,'height:15px')}${kv('行业平均','19.87%','',38,'height:16px;color:#888')}${kv('行业前三','38.64%','',38,'height:13px;color:#888')}</div><div style="width:180px;height:60px;background:#fafafa;padding:4px 8px;flex:none">${kv('<b>人工询单转化率</b>','44.84%','og',61,'height:15px')}${kv('行业平均','-','',38,'height:16px;color:#888')}${kv('行业前三','-','',38,'height:13px;color:#888')}</div></div></div>`,'background:#f0f1f5');
// reception dashboard with funnel
P+=box(1453,240,363,327,ln(1453,tabs([1463.6,1495,1561,1605.6,1643.5,1689,1734],[1]),1816,'height:22px;padding-top:2px;background:#fff;font-size:7px')
+`<div style="width:65px;height:1.500px;background:#4d94f8;margin:-1px 0 0 33px"></div><div style="margin:10px 0 0 3px;height:37px;background:#fff;padding:11px 0 0 10px">${seg([25,27,25,36],14,6,5,75)}</div>`
+`<div style="margin:12px 0 0 3px;background:#fff;height:246px"><div class="lane" style="height:21px;border-bottom:1px solid #eee;padding-left:10px;font-size:6px;gap:4px"><span>全自动接待和转人工率数据</span>${inf}</div><div class="d-flex" style="height:184px;border-bottom:1px solid #eee"><div style="width:246px;flex:none;border-right:1px solid #eee"><svg width="245" height="183" viewBox="1456 343 245 183" font-size="6" fill="#555"><path fill="#d9d9d9" d="M1466 355.500h132V396h-132z"/><path fill="#f3f1bd" d="M1466 396h132l-58 40.500h-16z"/><path fill="#b9dfea" d="M1524 436.500h16l-7 40.500h-3z"/><path fill="#5b93c7" d="M1530 477h3l-.5 41h-2z"/><path stroke="#ddd" d="M1598 376h14M1570 416.500h13M1538 457h13M1533 498h14"/><text x="1612.700" y="378.500">店铺接待人数 1905</text><text x="1584" y="419">全自动接待人数 244</text><text x="1552" y="459.500">请求转人工 42</text><text x="1548" y="500">成功转人工 16</text></svg></div><div class="mut" style="font-size:6px"><div style="height:92px;border-bottom:1px solid #eee;padding:12px 0 0 7px"><div style="height:9px">全自动接待人数</div><div style="font-size:10px;color:#444;height:28px;padding-top:5px">244</div><div style="padding:0 0 0 6px">${area(a1,731,102,28)}</div></div><div style="padding:12px 0 0 7px"><div class="lane" style="height:9px;gap:4px">全自动请求转人工率 ${inf}</div><div style="font-size:10px;color:#444;height:35px;padding-top:5px">17.21%</div><div style="padding:6px 0 0 6px">${area(a2,1005,102,16)}</div></div></div></div>`
+ln(1466,[[1473,'日期 <span style="font-size:5px;padding-left:4px">⇅</span>'],[1517,'店铺接待人数'],[1576,'全自动接待人数'],[1642,'全自动接待会话数'],[1714,'接待占比'],[1760,'请求人工人数']],1816,'margin:22px 0 0 10px;height:22px;background:#fafafa;font-size:5.300px')+'</div>','background:#f0f1f5');
// wide conversion dashboard
const cell=(l,v,ch,pad,f,bw,vf,top,gap)=>`<div style="width:${bw}px;flex:none;padding:${top}px 0 0 ${pad}px;border-right:1px solid #eee;height:100%"><div class="lane mut" style="height:${f*1.3}px;font-size:${f}px;gap:4px">${l} ${inf}</div><div style="font-size:${vf}px;color:#333;margin-top:${gap}px;line-height:1.2">${v}</div>${ch}</div>`;
const th=[519.6,563.7,622.8,681.5,740.6,799,865,937.4,1010.6,1083.8,1156.5];
const row=a=>th.map((x,i)=>[x,a[i]]);
P+=box(500,660,730,297,`<div style="height:29px;background:#fff" class="d-flex">${ln(500,tabs([510,541,607.3,653,691,736.7,781.8],[1,2]),830,'height:29px;padding-top:10px;font-size:7.100px;width:576px;flex:none')}<div style="width:65px;height:7px;background:#ff7a10;border-radius:0 0 5px 5px;box-shadow:0 1px 2px #ffa860"></div><div style="width:6px;height:2px;margin-left:17px;background:#333;border-radius:0 0 3px 3px"></div></div>`
+`<div style="width:46px;height:2px;background:#6f9ffa;margin:-2px 0 0 99px"></div><div style="margin:11px 5px 0 2px;height:38px;background:#fff;padding:11px 0 0 10px">${seg([26,26,25,38],15,6.2,4,76)}</div>`
+`<div style="margin:11px 5px 0 2px;background:#fff;height:209px"><div class="lane" style="height:22px;border-bottom:1px solid #eee;padding:2px 0 0 10px;font-size:6.100px;gap:4px"><span>询单转化总体数据</span>${inf}</div><div class="d-flex" style="height:91px;border-bottom:1px solid #eee">`
+cell('全自动参与询单人数','190',`<div style="padding:11px 0 0 6px">${area(c1,887,202,27)}</div>`,10,6.2,246,11,12,6)
+cell('全自动参与询单转化率','47.37%',`<div style="padding:9px 0 0 6px">${area(c2,566,202,29)}</div>`,10,6.2,246,11,12,6)
+cell('全自动参与成交金额','10,180',`<div style="padding:9px 0 0 6px">${area(c3,566,202,29)}</div>`,9,6.2,231,11,12,6)
+`</div><div class="lane blu justify-content-end" style="height:21px;padding:4px 13px 0 0;font-size:6.300px;gap:4px">${svg(7,7,'<path class="bl" stroke-width=".8" d="M3.500 0v5M1.500 3l2 2 2-2M0 6.500h7"/>')}<span>点击下载</span></div>`
+ln(512,row(['日期 ⇅','参与询单人数','参与下单人数','参与成交人数','参与成交金额','参与询单转化率','纯全自动询单人数','纯全自动下单人数','纯全自动成交人数','纯全自动成交金额','纯全自动询单转化率']),1216,'margin-left:10px;width:704px;height:22px;background:#fafafa;font-size:5.300px')
+ln(512,row(['20200405','190','92','90','10,180','47.37%','137','63','59','6,328','43.07%']),1216,'margin-left:10px;width:704px;height:23px;border-bottom:1px solid #eee;font-size:5.200px;color:#888')
+ln(512,row(['20200404','490','214','207','24,903','42.24%','354','141','129','15,689','36.44%']),1216,'margin-left:10px;width:704px;height:22px;border-bottom:1px solid #eee;font-size:5.200px;color:#888')+'</div>','background:#f0f1f5');
// selected picture
P+=box(1265,566,591,299,`<div style="height:54px;background:#fff"><div class="lane" style="height:13px;font-size:7.500px;padding-left:407px"><span class="mut" style="width:28px">全自动：</span><span style="color:#52c41a;width:72px">开启中 人工优先模式</span><span style="width:15px">${inf}</span><span class="blu" style="width:21px">修改</span><span class="blu" style="border:1px solid #7fa8f8;border-top:0;border-right:0;padding-left:5px;width:48px">需人工跟进开关</span></div>`
+ln(1265,tabs([1289.4,1332.6,1422.7,1484.3,1536.4,1598.8,1660],[2]),1720,'height:41px;padding-top:14px;font-size:9.500px')+'</div>'
+`<div style="width:62px;height:2px;background:#4d88f5;margin:-2px 0 0 146px"></div><div style="margin:14px 0 0 13px;height:51px;background:#fff;padding:16px 0 0 14px">${seg([35,36,35,51],19,8.3,6,103)}</div>`
+`<div style="margin:16px 0 0 13px;background:#fff;height:164px"><div class="lane" style="height:30px;border-bottom:1px solid #eee;padding-left:14px;font-size:8.200px;gap:5px"><span>询单转化总体数据</span>${inf}</div><div class="d-flex" style="height:122px;border-bottom:1px solid #e8e8e8">`
+cell('全自动参与询单人数','190',`<div style="padding:17px 0 0 8px">${area(c1,887,276,36)}</div>`,14,8.3,336,13.5,15,10)
+cell('全自动参与询单转化率','47.37%',`<div style="padding:14px 0 0 8px">${area(c2,566,276,39)}</div>`,12,8.3,336,13.5,15,10)+'</div></div>','background:#f0f1f5');

/* ---- red annotations, selection frame, freeze lines ---- */
const arrow=(x1,y1,x2,y2,w=9,hl=20,hw=16)=>{const L=Math.hypot(x2-x1,y2-y1),ux=(x2-x1)/L,uy=(y2-y1)/L,pt=(d,o)=>`${(x2-ux*d-uy*o).toFixed(1)},${(y2-uy*d+ux*o).toFixed(1)}`;return `<polygon points="${[pt(L,.6),pt(hl*.9,w/2),pt(hl,hw/2),pt(0,0),pt(hl,-hw/2),pt(hl*.9,-w/2),pt(L,-.6)].join(' ')}"/>`};
const A=[[255.7,399,270.4,262],[258,473,334.6,251.5],[375.3,699,484.6,247],[655.8,315,614,252.3,8],[638.8,379,654,250.7,8],[1173,882.7,739.8,255,10],[924,490,857,263.3,7],[1029,484,934.7,259.3,8],[936,530,1030.6,249,9],[1125.3,314.3,1138,249,8],[1111.7,366.7,1203.3,256.3],[1349.7,735,1302.3,261,10],[1688.8,354.7,1364,253.3,10],[1692,398.3,1610,526.7,4,10,8],[1626,531.7,1704.7,403.3,4,10,8],[631,694.3,657.7,708,4,8,9],[681,728,1144.4,882.3,5,10,10],[1440.3,622.7,1452.2,636,3,6,7],[1459.5,694,1432,727.7,5,9,9]];
const R=[[347.5,707,46.5,30],[1141,883,73.7,40],[841,491,99,18],[835.6,523.7,93,15.5],[1023.2,484,106,21.3],[1454.4,640,109.4,43.3],[1281.7,736.3,148.7,51.4]];
const H=[[1265,566],[1559.5,566],[1855.5,566],[1265,715.5],[1855.5,715.5],[1265,864.5],[1559.5,864.5],[1855.5,864.5]];
P+=`<div id="vbar" class="position-absolute"><div></div></div><svg id="over" width="1900" height="822" viewBox="0 168 1900 822"><path stroke="#36a23a" d="M134.500 176V990M60 259.500H1895"/><path d="M1229.500 881v42" stroke="#222" stroke-dasharray="13 2"/>
<g fill="none" stroke="#fb3a38" stroke-width="1.500">${R.map(r=>`<rect x="${r[0]}" y="${r[1]}" width="${r[2]}" height="${r[3]}"/>`).join('')}<ellipse cx="1725.300" cy="366.700" rx="34.500" ry="20.300"/><path d="M1564.500 566c10-21 48-21 59.500 0"/></g>
<g fill="#fb3a38">${A.map(a=>arrow(...a)).join('')}</g>
<path fill="none" stroke="#333" d="M1265 566h590.500v298.500H1265zM1559.500 549v12"/>
<g fill="#fff" stroke="#444">${H.map(h=>`<circle cx="${h[0]}" cy="${h[1]}" r="5.700"/>`).join('')}</g>
<circle cx="1559.500" cy="540" r="9.500" fill="#555"/><path fill="none" stroke="#fff" stroke-width="2" d="M1564 541a4.800 4.800 0 1 0-2 3.500M1561 541h5v-4"/></svg>`;
$('#stage').innerHTML=T+P;
</script>
</body>
</html>
